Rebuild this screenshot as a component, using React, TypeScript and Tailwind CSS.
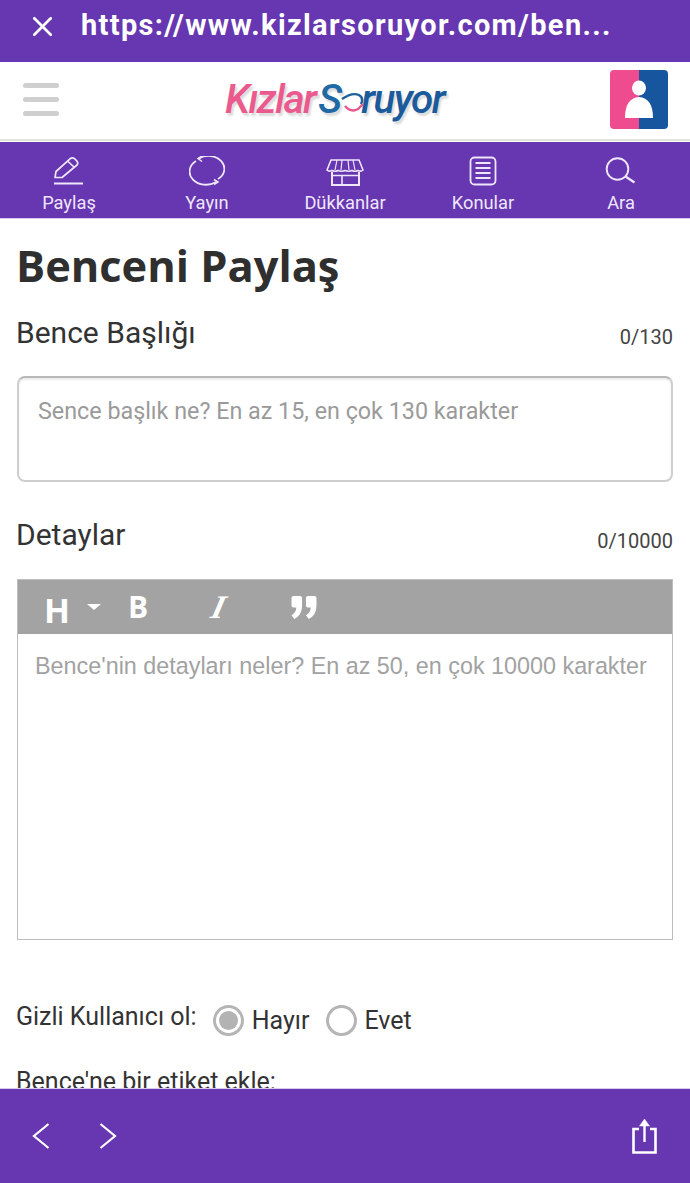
import { X } from "lucide-react";

const NAV_ITEMS = [
  { label: "Paylaş", icon: <PencilIcon /> },
  { label: "Yayın", icon: <CycleIcon /> },
  { label: "Dükkanlar", icon: <ShopIcon /> },
  { label: "Konular", icon: <ListIcon /> },
  { label: "Ara", icon: <SearchIcon /> },
];

function PencilIcon() {
  return (
    <svg width="32" height="30" viewBox="0 0 32 30" fill="none" stroke="currentColor" strokeWidth="1.7">
      <path d="M2 20.5 L3 14.5 L17 1.8 Q19.5 0 22 2.2 L24 4.2 Q25.5 6 24 8 L9 20.5 Z" strokeLinejoin="round" />
      <path d="M14.5 4 L21.5 10.5" />
      <path d="M1 26.5 H30" strokeWidth="2" />
    </svg>
  );
}

function CycleIcon() {
  return (
    <svg width="36" height="32" viewBox="0 0 36 32" fill="none" stroke="currentColor" strokeWidth="1.8">
      <path d="M10 2.5 A15.5 12.5 0 0 1 29 23" />
      <path d="M7 5 A15.5 12.5 0 0 0 27 26" />
      <path d="M13 0 L9 2.5 L13 5.5" strokeWidth="1.5" />
      <path d="M25 23.5 L29 26 L25 28.5" strokeWidth="1.5" />
    </svg>
  );
}

function ShopIcon() {
  return (
    <svg width="38" height="30" viewBox="0 0 38 30" fill="none" stroke="currentColor" strokeWidth="1.6">
      <path d="M5 3 H33 L37 13 Q35 15 32 13.5 Q29 15 26 13.5 Q22.5 15 19 13.5 Q15.5 15 12 13.5 Q9 15 6 13.5 Q3 15 1 13 Z" />
      <path d="M11 3 L9 13 M16 3 L15 13 M22 3 L23 13 M27 3 L29 13" strokeWidth="1.2" />
      <path d="M6 15 V28 H33 V15" strokeWidth="2" />
      <path d="M16 18.5 V28 M6 18.5 H33" />
    </svg>
  );
}

function ListIcon() {
  return (
    <svg width="28" height="32" viewBox="0 0 28 32" fill="none" stroke="currentColor" strokeWidth="1.8">
      <rect x="1.5" y="1.5" width="25" height="27" rx="4" />
      <path d="M6.5 7 H21.5 M6.5 12 H21.5 M6.5 17 H21.5 M6.5 22 H21.5" strokeWidth="2.1" />
    </svg>
  );
}

function SearchIcon() {
  return (
    <svg width="32" height="32" viewBox="0 0 32 32" fill="none" stroke="currentColor" strokeWidth="1.9">
      <circle cx="12.5" cy="13" r="10.8" />
      <path d="M20.5 20.5 L29.5 26.5" strokeWidth="2.2" />
    </svg>
  );
}

function Logo() {
  return (
    <div className="flex items-baseline font-['Roboto',sans-serif] text-[40.5px] font-medium italic leading-none tracking-[-1.6px] [text-shadow:2px_3px_2px_rgba(0,0,0,0.14)]">
      <span className="text-[#ea5a8e]">Kızlar</span>
      <span className="ml-[3px] text-[#1f6aa5]">S</span>
      <span className="relative text-[#e8578d]">
        <span className="opacity-0">o</span>
        <svg className="absolute left-0 top-[13px]" width="24" height="22" viewBox="0 0 24 22" fill="none">
          <path d="M1 7 Q11 0 18 3 Q23 6 20 12" stroke="#1f5f9c" strokeWidth="2.4" />
          <path d="M4 14 Q10 21 17 17 L22 12" stroke="#e8578d" strokeWidth="2.4" />
        </svg>
      </span>
      <span className="text-[#1b5a9b]">ruyor</span>
    </div>
  );
}

function AvatarBadge() {
  return (
    <div className="relative flex h-[59px] w-[58px] overflow-hidden rounded-[4px]">
      <div className="flex-1 bg-[#ee4c8f]" />
      <div className="flex-1 bg-[#17559e]" />
      <svg className="absolute inset-0" width="58" height="59" viewBox="0 0 58 59" fill="white">
        <ellipse cx="29" cy="18" rx="7" ry="7.5" />
        <path d="M15 48 Q15 28 29 27 Q43 28 43 48 Z" />
      </svg>
    </div>
  );
}

export default function App() {
  return (
    <div className="flex h-[1183px] w-[690px] flex-col overflow-hidden bg-white font-['Roboto',sans-serif] text-[#333]">
      <div className="flex h-[62px] shrink-0 items-center bg-[#6637b1] pb-[10px] pl-[26px] text-white">
        <X size={33} strokeWidth={1.9} />
        <span className="ml-[22px] text-[29px] font-bold tracking-[1.35px]">https://www.kizlarsoruyor.com/ben...</span>
      </div>

      <div className="mt-px flex h-[78px] shrink-0 items-center justify-between border-b-2 border-[#e4e2dc] bg-white pb-[3px] pl-[23px] pr-[22px]">
        <div className="flex w-[36px] flex-col gap-[9px]">
          <div className="h-[5px] rounded-full bg-[#cfcfcf]" />
          <div className="h-[5px] rounded-full bg-[#cfcfcf]" />
          <div className="h-[5px] rounded-full bg-[#cfcfcf]" />
        </div>
        <Logo />
        <AvatarBadge />
      </div>

      <nav className="mt-px grid h-[77px] shrink-0 grid-cols-5 border-b border-[#d9c9f2] bg-[#6637b1] pt-[14px] text-[#efe6fb]">
        {NAV_ITEMS.map((item) => (
          <div key={item.label} className="flex flex-col items-center">
            <div className="flex h-[32px] items-center">{item.icon}</div>
            <span className="mt-[4px] text-[18.3px] leading-[22px]">{item.label}</span>
          </div>
        ))}
      </nav>

      <main className="min-h-0 flex-1 overflow-hidden px-[17px]">
        <h1 className="-ml-px mt-[17px] font-['Open_Sans',sans-serif] text-[43.4px] font-bold leading-[60px] text-[#2f2f2f]">Benceni Paylaş</h1>

        <div className="mt-[17px] flex items-end justify-between">
          <label className="-ml-px text-[30px] leading-[40px] text-[#333]">Bence Başlığı</label>
          <span className="mb-[4px] text-[20px] leading-[24px] text-[#444]">0/130</span>
        </div>
        <div className="mt-[23px] h-[106px] rounded-[8px] border-2 border-[#cecece] border-t-[#b8b8b8] px-[19px] pt-[19px] text-[23.3px] leading-[28px] text-[#9a9a9a] shadow-[inset_0_2px_2px_rgba(0,0,0,0.08)]">
          Sence başlık ne? En az 15, en çok 130 karakter
        </div>

        <div className="mt-[33px] flex items-end justify-between">
          <label className="-ml-px text-[30px] leading-[40px] text-[#333]">Detaylar</label>
          <span className="mb-[2px] text-[20px] leading-[24px] text-[#444]">0/10000</span>
        </div>

        <div className="mt-[24px] h-[361px] border border-[#bdbdbd]">
          <div className="flex h-[54px] items-center bg-[#a3a3a3] pl-[26px] text-white">
            <span className="mt-[5px] font-['Open_Sans',sans-serif] text-[34px] font-bold leading-none">H</span>
            <span className="ml-[17px] h-0 w-0 border-x-[7px] border-t-[6px] border-x-transparent border-t-white" />
            <span className="ml-[27px] font-['Open_Sans',sans-serif] text-[30px] font-bold leading-none">B</span>
            <span className="ml-[64px] inline-block -skew-x-[14deg] font-['Liberation_Serif',serif] text-[33px] font-bold italic leading-none">I</span>
            <svg className="ml-[65px]" width="28" height="25" viewBox="0 0 28 26" fill="white">
              <path d="M1 3 Q1 1 3 1 H10 Q12 1 12 3 V11 Q12 21 4 25 L1 21 Q6 18 6 13 H3 Q1 13 1 11 Z" />
              <path d="M16 3 Q16 1 18 1 H25 Q27 1 27 3 V11 Q27 21 19 25 L16 21 Q21 18 21 13 H18 Q16 13 16 11 Z" />
            </svg>
          </div>
          <div className="px-[17px] pt-[18px] font-['Liberation_Sans',sans-serif] text-[23.35px] leading-[28px] text-[#a2a2a2]">
            Bence'nin detayları neler? En az 50, en çok 10000 karakter
          </div>
        </div>

        <div className="mt-[61px] flex items-start text-[25px] leading-[36px] text-[#333]">
          <span className="-ml-px mt-[-2px]">Gizli Kullanıcı ol:</span>
          <div className="ml-[16px] flex items-center">
            <span className="flex h-[31px] w-[31px] items-center justify-center rounded-full border-[3px] border-[#b5b5b5]">
              <span className="h-[19px] w-[19px] rounded-full bg-[#b3b3b3]" />
            </span>
            <span className="ml-[8px] mt-[2px]">Hayır</span>
            <span className="ml-[17px] h-[31px] w-[31px] rounded-full border-[3px] border-[#b5b5b5]" />
            <span className="ml-[7px] mt-[2px]">Evet</span>
          </div>
        </div>
        <div className="-ml-px mt-[25px] text-[25px] leading-[36px] text-[#333]">Bence'ne bir etiket ekle:</div>
      </main>

      <div className="flex h-[95px] shrink-0 items-center border-t border-[#d9c9f2] bg-[#6637b1] pl-[32px] pr-[33px] text-white">
        <svg width="18" height="26" viewBox="0 0 18 26" fill="none" stroke="currentColor" strokeWidth="2.2">
          <path d="M16.5 1 L2 13 L16.5 25" />
        </svg>
        <svg className="ml-[49px]" width="18" height="26" viewBox="0 0 18 26" fill="none" stroke="currentColor" strokeWidth="2.2">
          <path d="M1.5 1 L16 13 L1.5 25" />
        </svg>
        <svg className="ml-auto" width="25" height="36" viewBox="0 0 25 36" fill="none" stroke="currentColor" strokeWidth="2.6">
          <path d="M7 11 H1.5 V34.5 H23.5 V11 H18" />
          <path d="M12.5 6 V24" strokeWidth="2.4" />
          <path d="M7.5 8 L12.5 1 L17.5 8 Z" fill="currentColor" strokeWidth="0.5" />
        </svg>
      </div>
    </div>
  );
}
